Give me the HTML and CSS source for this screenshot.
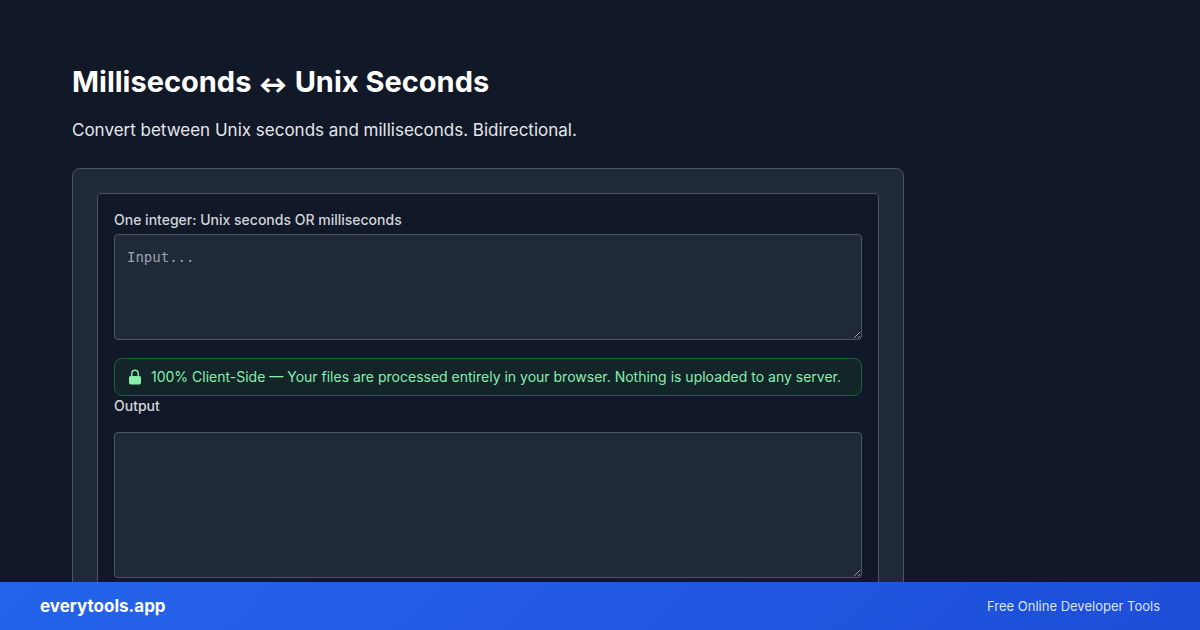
FILE: index.html
```html
<!DOCTYPE html>
<html lang="en">
<head>
<meta charset="utf-8">
<title>Milliseconds ↔ Unix Seconds</title>
<link rel="stylesheet" href="styles.css">
</head>
<body>
<main class="page">
  <h1 class="title">Milliseconds <span class="arrow">↔</span> Unix Seconds</h1>
  <p class="lead">Convert between Unix seconds and milliseconds. Bidirectional.</p>
  <section class="card">
    <div class="panel">
      <label class="label" for="input">One integer: Unix seconds OR milliseconds</label>
      <textarea class="area area-input" id="input" placeholder="Input..."></textarea>
      <p class="notice">
        <svg class="lock" viewBox="0 0 16 16" aria-hidden="true"><rect x="2" y="7" width="12" height="8.4" rx="1.6" fill="currentColor"/><path d="M4.8 7.5V4.6a3.2 3.4 0 0 1 6.4 0v2.9" fill="none" stroke="currentColor" stroke-width="1.4"/></svg>
        <span>100% Client-Side — Your files are processed entirely in your browser. Nothing is uploaded to any server.</span>
      </p>
      <label class="label" for="output">Output</label>
      <textarea class="area area-output" id="output" readonly></textarea>
    </div>
  </section>
</main>
<footer class="footer">
  <span class="brand">everytools.app</span>
  <span class="tagline">Free Online Developer Tools</span>
</footer>
</body>
</html>
```
FILE: styles.css
```css
* { box-sizing: border-box; }

html { color-scheme: dark; }

body {
  margin: 0;
  height: 100vh;
  overflow: hidden;
  display: flex;
  flex-direction: column;
  background: #111827;
  color: #f3f4f6;
  font-family: Inter, "Liberation Sans", sans-serif;
}

.page {
  flex: 1;
  min-height: 0;
  overflow: hidden;
  width: 100%;
  max-width: 976px;
  padding: 64px 72px 0;
}

.title {
  margin: 0 0 16px;
  color: #fff;
  font-size: 29px;
  line-height: 36px;
  font-weight: 700;
}

.arrow {
  font-size: 22px;
  line-height: 1;
  font-weight: 900;
  vertical-align: middle;
}

.lead {
  margin: 0 0 24px;
  color: #e5e7eb;
  font-size: 17px;
  line-height: 28px;
}

.card {
  padding: 24px;
  background: #1f2937;
  border: 1px solid #4b5563;
  border-radius: 8px;
}

.panel {
  padding: 16px;
  background: #111827;
  border: 1px solid #4b5563;
  border-radius: 4px;
}

.label {
  display: block;
  color: #d1d5db;
  font-size: 14px;
  line-height: 20px;
  font-weight: 500;
}

.area {
  display: block;
  width: 100%;
  padding: 12px;
  background: #1f2937;
  color: #f3f4f6;
  border: 1px solid #4b5563;
  border-radius: 4px;
  font-family: "DejaVu Sans Mono", monospace;
  font-size: 14px;
  line-height: 20px;
  resize: vertical;
}

.area::placeholder { color: #9ca3af; }

.area-input {
  height: 106px;
  margin: 4px 0 18px;
}

.area-output {
  height: 146px;
  margin-top: 16px;
}

.notice {
  display: flex;
  align-items: center;
  gap: 8px;
  margin: 0;
  padding: 8px 12px;
  color: #86efac;
  background: #14252a;
  border: 1px solid #166534;
  border-radius: 8px;
  font-size: 14px;
  line-height: 20px;
}

.lock {
  flex: none;
  width: 16px;
  height: 16px;
}

.footer {
  display: flex;
  align-items: center;
  justify-content: space-between;
  height: 48px;
  padding: 0 40px;
  color: #fff;
  background: linear-gradient(135deg, #2563eb, #1d4ed8);
}

.brand { font-size: 17px; font-weight: 700; }

.tagline { font-size: 13px; color: #dbe4fb; }
```
